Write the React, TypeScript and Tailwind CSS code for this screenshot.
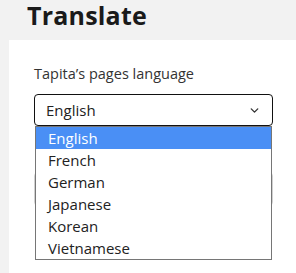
import { ChevronDown } from "lucide-react";

const languages = ["English", "French", "German", "Japanese", "Korean", "Vietnamese"];

export default function App() {
  const selected = "English";

  return (
    <div className="min-h-[273px] w-[296px] overflow-hidden bg-[#f2f2f2] font-['Open_Sans',sans-serif]">
      <div className="flex h-[40px] items-start pl-[27px]">
        <h1 className="text-[25px] font-bold leading-[30px] tracking-[0.2px] text-[#1a1a1a]">Translate</h1>
      </div>

      <div className="ml-[9px] h-[233px] bg-white pl-[25px] pr-[23px] pt-[25px]">
        <p className="text-[14.5px] leading-[18px] text-[#333]">Tapita’s pages language</p>

        <div className="relative mt-[11px]">
          <div className="flex h-[32px] items-center justify-between rounded-[4px] border-[1.5px] border-[#111] pl-[11px] pr-[11px]">
            <span className="text-[15px] text-[#222]">{selected}</span>
            <ChevronDown size={13} strokeWidth={2.5} className="text-[#333]" />
          </div>

          {/* field that sits under the open list */}
          <div className="mt-[46px] h-[34px] rounded-[4px] border border-[#d0d0d0]" />

          <ul className="absolute left-[1px] right-[1px] top-[32px] border border-[#767676] bg-white">
            {languages.map((lang) => (
              <li
                key={lang}
                className={`flex h-[22px] items-center pl-[12px] text-[15px] ${
                  lang === selected ? "bg-[#4a8ff5] text-white" : "text-[#222]"
                }`}
              >
                {lang}
              </li>
            ))}
          </ul>
        </div>
      </div>
    </div>
  );
}
